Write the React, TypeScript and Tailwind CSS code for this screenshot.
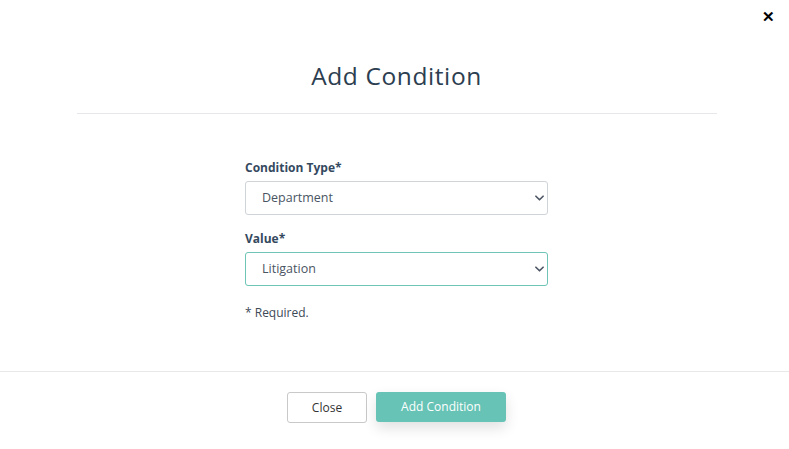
import { ReactNode } from "react";

function Chevron() {
  return (
    <svg
      viewBox="0 0 10 6"
      className="pointer-events-none absolute right-[4px] top-1/2 h-[6px] w-[9px] -translate-y-1/2"
      fill="none"
      stroke="#4b5563"
      strokeWidth="1.8"
      strokeLinecap="round"
      strokeLinejoin="round"
    >
      <path d="M1 1l4 4 4-4" />
    </svg>
  );
}

function Field({
  label,
  value,
  active,
}: {
  label: string;
  value: string;
  active?: boolean;
}) {
  return (
    <div className="flex flex-col">
      <label className="mb-[5px] text-[12px] font-bold leading-[16px] text-[#34495e]">
        {label}
      </label>
      <div className="relative">
        <select
          defaultValue={value}
          className={
            "h-[34px] w-full appearance-none rounded-[3px] border bg-white pl-[16px] text-[12.5px] text-[#4a5563] outline-none " +
            (active ? "border-[#6cc5b6]" : "border-[#cfd4d9]")
          }
        >
          <option>{value}</option>
        </select>
        <Chevron />
      </div>
    </div>
  );
}

function Button({
  children,
  primary,
}: {
  children: ReactNode;
  primary?: boolean;
}) {
  return (
    <button
      className={
        primary
          ? "h-[30px] w-[130px] rounded-[3px] bg-[#66c3b5] text-[12px] text-white shadow-[0_6px_14px_rgba(0,0,0,0.12)]"
          : "h-[31px] w-[80px] rounded-[3px] border border-[#c9c9c9] bg-white text-[12px] text-[#333]"
      }
    >
      {children}
    </button>
  );
}

export default function App() {
  return (
    <div
      className="relative h-[449px] w-[789px] bg-white"
      style={{ fontFamily: '"Open Sans", "Noto Sans", sans-serif' }}
    >
      <button className="absolute right-[14px] top-[9px] text-[15px] font-bold leading-none text-black">
        ✕
      </button>

      <div className="pl-[4px]">
        <div className="flex flex-col items-center pt-[60px]">
          <h2 className="text-[24.5px] leading-[32px] tracking-[0.6px] text-[#2c3e50]">
            Add Condition
          </h2>
          <div className="mt-[21px] h-px w-[640px] bg-[#e5e7eb]" />
        </div>

        <div className="mx-auto mt-[46px] flex w-[303px] flex-col gap-[16px]">
          <Field label="Condition Type*" value="Department" />
          <Field label="Value*" value="Litigation" active />
          <p className="mt-[2px] text-[12px] text-[#3d4a57]">* Required.</p>
        </div>
      </div>

      <div className="mt-[49px] h-px w-full bg-[#e8e8e8]" />

      <div className="flex justify-center gap-[9px] pt-[20px] pl-[4px]">
        <Button>Close</Button>
        <Button primary>Add Condition</Button>
      </div>
    </div>
  );
}
